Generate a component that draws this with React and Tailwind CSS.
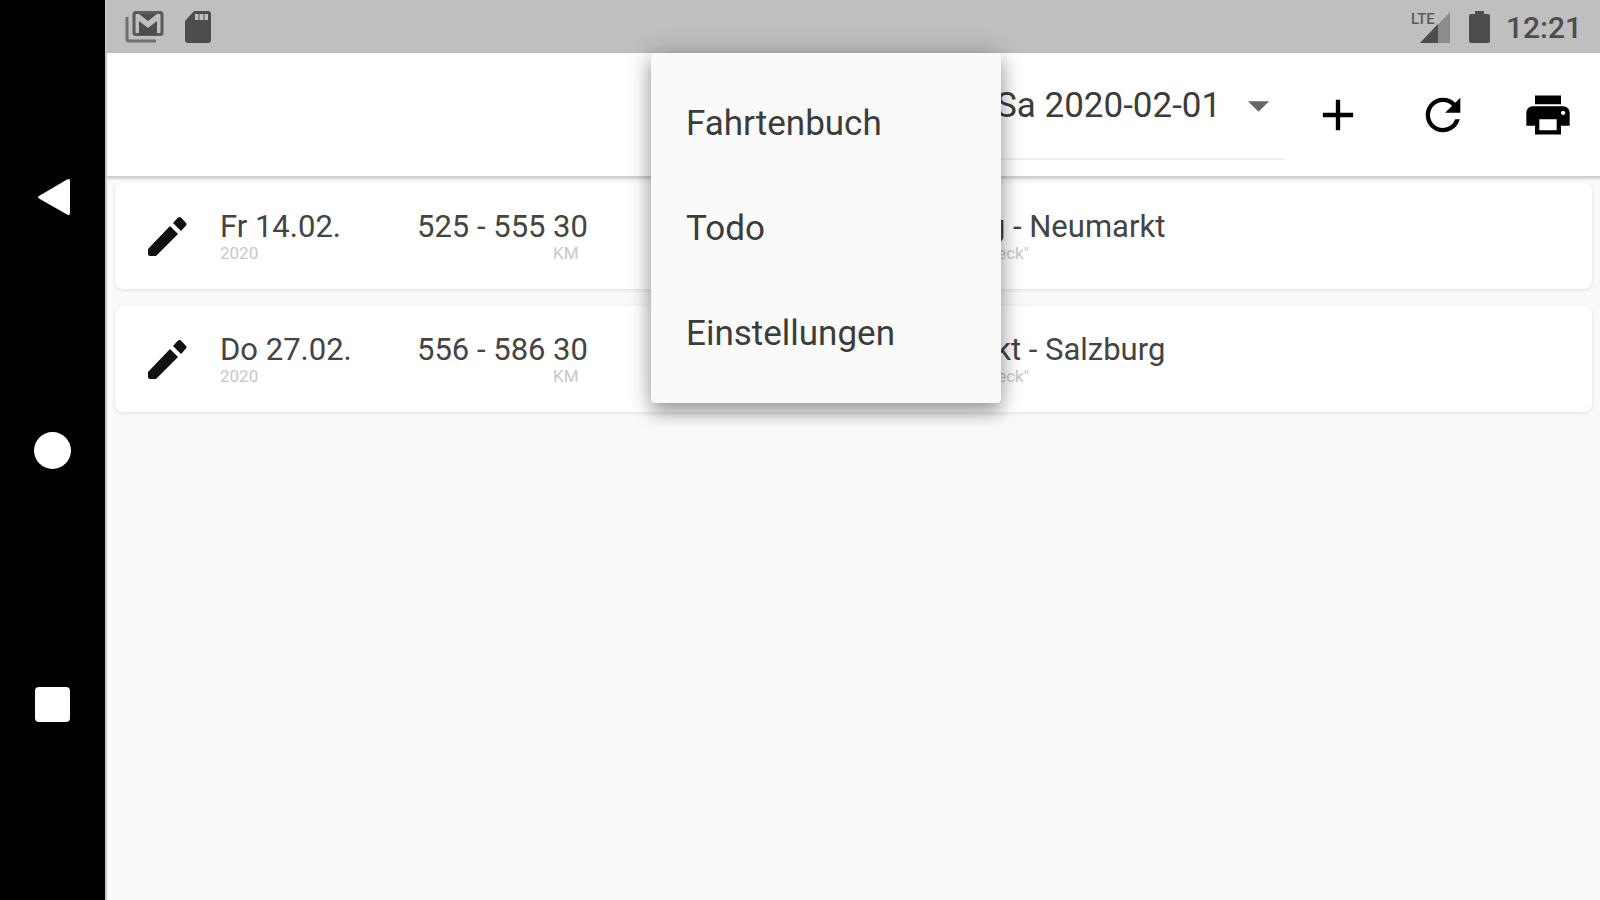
import { MdAdd, MdPrint, MdRefresh } from "react-icons/md";

const trips = [
  { date: "Fr 14.02.", year: "2020", range: "525 - 555", km: "30", route: "Salzburg - Neumarkt", purpose: 'Privatfahrt "Zweck"' },
  { date: "Do 27.02.", year: "2020", range: "556 - 586", km: "30", route: "Neumarkt - Salzburg", purpose: 'Privatfahrt "Zweck"' },
];

const menuItems = ["Fahrtenbuch", "Todo", "Einstellungen"];

function NavBar() {
  return (
    <nav className="grid w-[105px] shrink-0 auto-rows-[254px] content-center bg-black">
      <button aria-label="Zurück" className="flex items-center justify-center">
        <svg className="h-10 w-10" viewBox="0 0 40 40" fill="white">
          <path d="M6 20 34 3.500Q37 2 37 5V37Q37 40 34 38.500L6 22.500Q4 21 6 20Z" />
        </svg>
      </button>
      <button aria-label="Startseite" className="flex items-center justify-center">
        <span className="h-[37px] w-[37px] rounded-full bg-white" />
      </button>
      <button aria-label="Übersicht" className="flex items-center justify-center">
        <span className="h-[35px] w-[35px] rounded bg-white" />
      </button>
    </nav>
  );
}

function StatusBar() {
  return (
    <div className="flex h-[53px] items-center bg-[#bfbfbf] pr-[18px] pl-[18px] text-[#4d4d4d]">
      <svg className="h-8 w-10" viewBox="0 0 40 32" fill="none">
        <path d="M2 6V28Q2 30 4 30H31" stroke="#707070" strokeWidth="3" />
        <rect x="9" y="1.500" width="28" height="22" rx="2" stroke="#5a5a5a" strokeWidth="3" />
        <path d="M14 24V10L23 17 32 10V24Z" fill="#4d4d4d" />
        <path d="M14 3H32L23 10Z" fill="#4d4d4d" />
      </svg>
      <svg className="ml-5 h-8 w-[26px]" viewBox="0 0 26 32" fill="#4d4d4d">
        <path d="M9 0H23Q26 0 26 3V29Q26 32 23 32H3Q0 32 0 29V10Z" />
        <path d="M10 3H13V9H10ZM15 3H18V9H15ZM20 3H23V9H20Z" fill="#bfbfbf" />
        <path d="M10 3H23V9H10Z" fill="#bfbfbf" opacity="0.5" />
      </svg>
      <div className="ml-auto flex items-center">
        <div className="relative">
          <svg className="h-8 w-10" viewBox="0 0 40 32">
            <path d="M9 32 39 1V32Z" fill="#8c8c8c" />
            <path d="M9 32 27 13V32Z" fill="#4d4d4d" />
          </svg>
          <span className="absolute top-0 left-0 text-[15px] leading-4 font-medium text-[#5a5a5a]">LTE</span>
        </div>
        <svg className="ml-[18px] h-8 w-[21px]" viewBox="0 0 21 32" fill="#4d4d4d">
          <path d="M6 0H15V3H19Q21 3 21 5V30Q21 32 19 32H2Q0 32 0 30V5Q0 3 2 3H6Z" />
        </svg>
        <span className="ml-4 pt-0.5 text-[30px] leading-8 font-medium">12:21</span>
      </div>
    </div>
  );
}

function ToolButton({ label, icon: Icon }) {
  return (
    <button aria-label={label} className="flex w-[105px] items-center justify-center text-black">
      <Icon className="h-[52px] w-[52px]" />
    </button>
  );
}

function Toolbar() {
  return (
    <header className="relative z-10 flex h-[123px] justify-end bg-white shadow-[0_2px_2px_1px_rgba(0,0,0,0.17)]">
      <div className="relative mb-[16px] w-[330px] border-b-2 border-[#f0f0f0]">
        <select
          aria-label="Datum"
          className="h-full w-full appearance-none bg-transparent pt-0.5 pl-[41px] text-[35px] text-[#3c3c3c]"
        >
          <option>Sa 2020-02-01</option>
        </select>
        <svg className="pointer-events-none absolute top-12 right-4 h-[11px] w-[21px]" viewBox="0 0 22 11" fill="#666">
          <path d="M0 0H22L11 11Z" />
        </svg>
      </div>
      <ToolButton label="Neu" icon={MdAdd} />
      <ToolButton label="Aktualisieren" icon={MdRefresh} />
      <ToolButton label="Drucken" icon={MdPrint} />
    </header>
  );
}

function Cell({ className, value, note }) {
  return (
    <div className={className}>
      <p className="h-8 text-[31px] leading-8 whitespace-nowrap text-[#444]">{value}</p>
      <p className="h-5 text-[17px] leading-5 whitespace-nowrap text-[#c8c8c8]">{note}</p>
    </div>
  );
}

function Trip({ trip }) {
  return (
    <li className="flex h-[106px] items-center rounded-lg bg-white pt-0.5 shadow-[0_1px_3px_1px_rgba(0,0,0,0.08)]">
      <button aria-label="Bearbeiten" className="flex w-[105px] shrink-0 items-center justify-center text-[#111]">
        <svg className="h-10 w-10" viewBox="0 0 40 40" fill="currentColor">
          <path d="M0 32 22 9 30 17 8 39H2Q0 39 0 37Z" />
          <path d="M25 6 30 0.500Q32-0.500 33 0.500L38 6Q39 7 38 8.500L33 14Z" />
        </svg>
      </button>
      <Cell className="w-[197px]" value={trip.date} note={trip.year} />
      <Cell className="w-[136px]" value={trip.range} note="" />
      <Cell className="w-[332px]" value={trip.km} note="KM" />
      <Cell className="flex-1" value={trip.route} note={trip.purpose} />
    </li>
  );
}

function Menu() {
  return (
    <ul className="absolute top-[53px] right-[599px] z-20 w-[350px] rounded-sm bg-[#fafafa] pt-[19px] pb-4 shadow-[0_10px_18px_rgba(0,0,0,0.3),0_0_26px_rgba(0,0,0,0.2)]">
      {menuItems.map((item) => (
        <li key={item}>
          <button className="h-[105px] w-full px-[35px] text-left text-[35px] text-[#3c3c3c]">{item}</button>
        </li>
      ))}
    </ul>
  );
}

export default function App() {
  return (
    <div className="flex min-h-screen bg-[#fafafa] font-['Roboto',sans-serif]">
      <NavBar />
      <div className="relative min-w-0 flex-1 overflow-hidden border-l-2 border-[#c8c8c8]">
        <StatusBar />
        <Toolbar />
        <ul className="space-y-[17px] pt-[7px] pr-2 pl-2">
          {trips.map((trip) => (
            <Trip key={trip.date} trip={trip} />
          ))}
        </ul>
        <Menu />
      </div>
    </div>
  );
}
